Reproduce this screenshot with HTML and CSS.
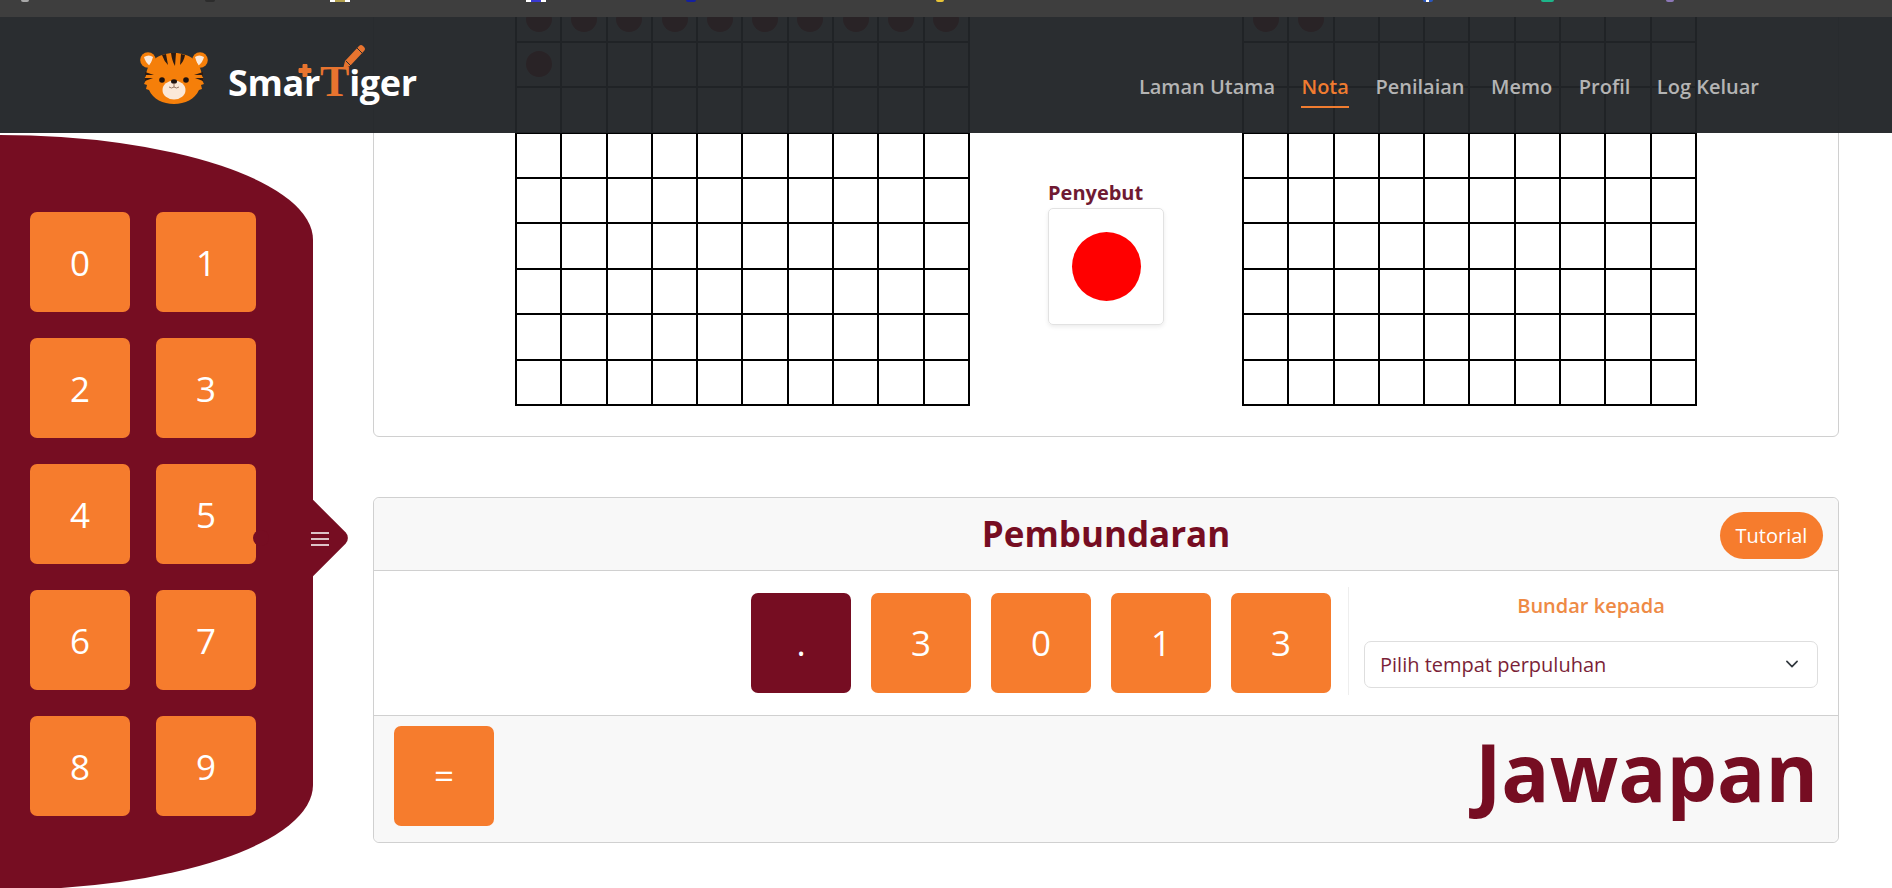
FILE: index.html
```html
<!DOCTYPE html>
<html>

<head>
    <meta charset="utf-8">
    <title>SmarTiger - Nota</title>
    <link rel="stylesheet" href="styles.css">
</head>

<body>
    <div class="tab-strip">
        <span class="fav fav-grey"></span>
        <span class="fav fav-dark"></span>
        <span class="fav fav-gold"></span>
        <span class="fav fav-white"></span>
        <span class="fav fav-blue"></span>
        <span class="fav fav-yellow"></span>
        <span class="fav fav-fb"></span>
        <span class="fav fav-green"></span>
        <span class="fav fav-purple"></span>
    </div>

    <!-- content is scrolled, the top of the first card is out of view -->
    <main class="page">
        <section class="card card-blocks">
            <div class="block-grid">
                <div class="cell dot"></div><div class="cell dot"></div><div class="cell dot"></div><div class="cell dot"></div><div class="cell dot"></div><div class="cell dot"></div><div class="cell dot"></div><div class="cell dot"></div><div class="cell dot"></div><div class="cell dot"></div>
                <div class="cell dot"></div><div class="cell dot"></div><div class="cell dot"></div><div class="cell dot"></div><div class="cell dot"></div><div class="cell dot"></div><div class="cell dot"></div><div class="cell dot"></div><div class="cell dot"></div><div class="cell dot"></div>
                <div class="cell dot"></div><div class="cell"></div><div class="cell"></div><div class="cell"></div><div class="cell"></div><div class="cell"></div><div class="cell"></div><div class="cell"></div><div class="cell"></div><div class="cell"></div>
                <div class="cell"></div><div class="cell"></div><div class="cell"></div><div class="cell"></div><div class="cell"></div><div class="cell"></div><div class="cell"></div><div class="cell"></div><div class="cell"></div><div class="cell"></div>
                <div class="cell"></div><div class="cell"></div><div class="cell"></div><div class="cell"></div><div class="cell"></div><div class="cell"></div><div class="cell"></div><div class="cell"></div><div class="cell"></div><div class="cell"></div>
                <div class="cell"></div><div class="cell"></div><div class="cell"></div><div class="cell"></div><div class="cell"></div><div class="cell"></div><div class="cell"></div><div class="cell"></div><div class="cell"></div><div class="cell"></div>
                <div class="cell"></div><div class="cell"></div><div class="cell"></div><div class="cell"></div><div class="cell"></div><div class="cell"></div><div class="cell"></div><div class="cell"></div><div class="cell"></div><div class="cell"></div>
                <div class="cell"></div><div class="cell"></div><div class="cell"></div><div class="cell"></div><div class="cell"></div><div class="cell"></div><div class="cell"></div><div class="cell"></div><div class="cell"></div><div class="cell"></div>
                <div class="cell"></div><div class="cell"></div><div class="cell"></div><div class="cell"></div><div class="cell"></div><div class="cell"></div><div class="cell"></div><div class="cell"></div><div class="cell"></div><div class="cell"></div>
                <div class="cell"></div><div class="cell"></div><div class="cell"></div><div class="cell"></div><div class="cell"></div><div class="cell"></div><div class="cell"></div><div class="cell"></div><div class="cell"></div><div class="cell"></div>
            </div>

            <div class="denominator">
                <div class="denominator-label">Penyebut</div>
                <div class="denominator-box"><span class="red-circle"></span></div>
            </div>

            <div class="block-grid">
                <div class="cell dot"></div><div class="cell dot"></div><div class="cell dot"></div><div class="cell dot"></div><div class="cell dot"></div><div class="cell dot"></div><div class="cell dot"></div><div class="cell dot"></div><div class="cell dot"></div><div class="cell dot"></div>
                <div class="cell dot"></div><div class="cell dot"></div><div class="cell"></div><div class="cell"></div><div class="cell"></div><div class="cell"></div><div class="cell"></div><div class="cell"></div><div class="cell"></div><div class="cell"></div>
                <div class="cell"></div><div class="cell"></div><div class="cell"></div><div class="cell"></div><div class="cell"></div><div class="cell"></div><div class="cell"></div><div class="cell"></div><div class="cell"></div><div class="cell"></div>
                <div class="cell"></div><div class="cell"></div><div class="cell"></div><div class="cell"></div><div class="cell"></div><div class="cell"></div><div class="cell"></div><div class="cell"></div><div class="cell"></div><div class="cell"></div>
                <div class="cell"></div><div class="cell"></div><div class="cell"></div><div class="cell"></div><div class="cell"></div><div class="cell"></div><div class="cell"></div><div class="cell"></div><div class="cell"></div><div class="cell"></div>
                <div class="cell"></div><div class="cell"></div><div class="cell"></div><div class="cell"></div><div class="cell"></div><div class="cell"></div><div class="cell"></div><div class="cell"></div><div class="cell"></div><div class="cell"></div>
                <div class="cell"></div><div class="cell"></div><div class="cell"></div><div class="cell"></div><div class="cell"></div><div class="cell"></div><div class="cell"></div><div class="cell"></div><div class="cell"></div><div class="cell"></div>
                <div class="cell"></div><div class="cell"></div><div class="cell"></div><div class="cell"></div><div class="cell"></div><div class="cell"></div><div class="cell"></div><div class="cell"></div><div class="cell"></div><div class="cell"></div>
                <div class="cell"></div><div class="cell"></div><div class="cell"></div><div class="cell"></div><div class="cell"></div><div class="cell"></div><div class="cell"></div><div class="cell"></div><div class="cell"></div><div class="cell"></div>
                <div class="cell"></div><div class="cell"></div><div class="cell"></div><div class="cell"></div><div class="cell"></div><div class="cell"></div><div class="cell"></div><div class="cell"></div><div class="cell"></div><div class="cell"></div>
            </div>
        </section>

        <section class="card card-round">
            <header class="card-head">
                <h2>Pembundaran</h2>
                <button class="btn-tutorial">Tutorial</button>
            </header>
            <div class="card-body">
                <div class="tile tile-maroon">.</div>
                <div class="tile">3</div>
                <div class="tile">0</div>
                <div class="tile">1</div>
                <div class="tile">3</div>
                <div class="round-panel">
                    <div class="round-label">Bundar kepada</div>
                    <div class="round-select">
                        <span>Pilih tempat perpuluhan</span>
                        <svg class="chevron" viewBox="0 0 16 16" width="16" height="16">
                            <path d="M2 5l6 6 6-6" fill="none" stroke="#343a40" stroke-width="2" stroke-linecap="round" stroke-linejoin="round" />
                        </svg>
                    </div>
                </div>
            </div>
            <footer class="card-foot">
                <div class="tile">=</div>
                <div class="answer">Jawapan</div>
            </footer>
        </section>
    </main>

    <nav class="navbar">
        <a class="brand">
            <svg class="tiger" viewBox="0 0 80 65" width="80" height="65">
                <circle cx="13" cy="15" r="7.8" fill="#f57f0a" />
                <circle cx="65" cy="15" r="7.8" fill="#f57f0a" />
                <path d="M9 12q5-3 9 0l-3 9q-5-4-6-9z" fill="#fbe8d8" />
                <path d="M69 12q-5-3-9 0l3 9q5-4 6-9z" fill="#fbe8d8" />
                <path d="M39 8c16 0 27 9 28 23l2 3-2 1 2 4-3 1 1 4-3 1c-4 9-14 14-25 14s-21-5-25-14l-3-1 1-4-3-1 2-4-2-1 2-3C12 17 23 8 39 8z" fill="#f57f0a" />
                <path d="M27 10l4-1 2 11q-4-4-6-10zM36 8h5l-1 13q-3-5-4-13zM46 9l4 1q-1 6-5 10z" fill="#2b1a12" />
                <path d="M10 27l9 3-9 0zM9 33l9 0-8 3zM68 27l-9 3 9 0zM69 33l-9 0 8 3z" fill="#2b1a12" />
                <circle cx="27" cy="35" r="2.8" fill="#1d1210" />
                <circle cx="51" cy="35" r="2.8" fill="#1d1210" />
                <ellipse cx="39" cy="45" rx="11.5" ry="9.5" fill="#fbe8d8" />
                <ellipse cx="39" cy="36.5" rx="3" ry="2.2" fill="#1d1210" />
                <path d="M39 38v4M34 42q2.500 2 5 0q2.500 2 5 0" fill="none" stroke="#8a6a58" stroke-width="0.9" />
            </svg>
            <span class="brand-name">Smar<span class="brand-t">T</span>iger</span>
            <svg class="brand-pencil" viewBox="0 0 70 40" width="70" height="40">
                <path d="M3 29.500h4v-4h4v4h4v4h-4v4h-4v-4h-4z" fill="#e8742f" stroke="#e8742f" stroke-linejoin="round" />
                <path d="M47 30l2-8 14-15q2-2 4 0l1 1q2 2 0 4l-14 15z" fill="#e8742f" />
                <path d="M50 22l6 6M61 9l6 6" stroke="#2a2d31" stroke-width="1" />
            </svg>
        </a>
        <ul class="nav-links">
            <li><a>Laman Utama</a></li>
            <li><a class="active">Nota</a></li>
            <li><a>Penilaian</a></li>
            <li><a>Memo</a></li>
            <li><a>Profil</a></li>
            <li><a>Log Keluar</a></li>
        </ul>
    </nav>

    <aside class="sidebar">
        <div class="tile">0</div>
        <div class="tile">1</div>
        <div class="tile">2</div>
        <div class="tile">3</div>
        <div class="tile">4</div>
        <div class="tile">5</div>
        <div class="tile">6</div>
        <div class="tile">7</div>
        <div class="tile">8</div>
        <div class="tile">9</div>
        <div class="sidebar-toggle">
            <svg viewBox="0 0 18 14" width="18" height="14">
                <path d="M0 1h18M0 7h18M0 13h18" stroke="#fff" stroke-width="1.600" />
            </svg>
        </div>
    </aside>
</body>

</html>
```

FILE: styles.css
```css
html,
body {
    height: 100%;
    margin: 0;
    padding: 0;
}

body {
    position: relative;
    overflow: hidden;
    background: #fff;
    font-family: "Open Sans", "Liberation Sans", sans-serif;
}

/* browser bookmarks, only the bottom edge is left */
.tab-strip {
    display: flex;
    position: relative;
    z-index: 3;
    height: 17px;
    background: #3e3e3e;
}

.fav {
    display: block;
    height: 2px;
    border-radius: 0 0 6px 6px;
}

.fav-grey { width: 8px; margin-left: 21px; background: #a9a9a9; }
.fav-dark { width: 10px; margin-left: 176px; background: #2c2c2c; }
.fav-gold { width: 20px; margin-left: 115px; border-radius: 0; background: linear-gradient(90deg, #fff 25%, #b3a14e 25%, #b3a14e 75%, #fff 75%); }
.fav-white { width: 20px; margin-left: 176px; border-radius: 0; background: linear-gradient(90deg, #fff 25%, #3a3ad0 25%, #3a3ad0 75%, #fff 75%); }
.fav-blue { width: 10px; margin-left: 140px; background: #1420a0; }
.fav-yellow { width: 8px; margin-left: 240px; background: #e8c437; }
.fav-fb { width: 10px; margin-left: 479px; background: linear-gradient(90deg, #2a57c0 35%, #fff 35%, #fff 65%, #2a57c0 65%); }
.fav-green { width: 13px; margin-left: 108px; background: #1db58a; }
.fav-purple { width: 8px; margin-left: 112px; background: #8d78b8; }

.navbar {
    position: absolute;
    top: 17px;
    left: 0;
    right: 0;
    z-index: 2;
    height: 116px;
    display: flex;
    justify-content: space-between;
    align-items: center;
    padding: 0 133px 0 135px;
    box-sizing: border-box;
    background: rgba(33, 36, 40, .96);
}

.brand {
    position: relative;
    display: flex;
    align-items: center;
    margin-top: 5px;
}

.brand-name {
    margin: 9px 0 0 13px;
    font-size: 36px;
    font-weight: 700;
    letter-spacing: -.3px;
    color: #fff;
}

.brand-t {
    font-family: "Liberation Serif", serif;
    font-weight: 700;
    font-size: 44px;
    line-height: 1;
    color: #e8742f;
}

.brand-pencil {
    position: absolute;
    left: 161px;
    top: -6px;
}

.nav-links {
    display: flex;
    gap: 26.5px;
    list-style: none;
    margin: 30px 0 0;
    padding: 0;
}

.nav-links a {
    display: block;
    padding-bottom: 6px;
    border-bottom: 2px solid transparent;
    font-size: 20px;
    font-weight: 600;
    color: #b4b4b4;
}

.nav-links a.active {
    color: #f07c30;
    border-bottom-color: #f07c30;
}

.page {
    margin-top: -97px;
    padding: 0 53px 0 373px;
}

.card {
    border: 1px solid #d0d0d0;
    border-radius: 6px;
    background: #fff;
}

.card-blocks {
    display: flex;
    justify-content: center;
    gap: 78px;
    padding: 29px 0 30px;
    margin-bottom: 60px;
}

.block-grid {
    display: grid;
    grid-template-columns: repeat(10, 1fr);
    grid-auto-rows: 45.4px;
    width: 455px;
    border-top: 2px solid #000;
    border-left: 2px solid #000;
    box-sizing: border-box;
}

.cell {
    display: flex;
    justify-content: center;
    align-items: center;
    border-right: 2px solid #000;
    border-bottom: 2px solid #000;
}

.dot::before {
    content: "";
    width: 26px;
    height: 26px;
    border-radius: 50%;
    background: #e00000;
}

.denominator {
    align-self: flex-end;
    width: 116px;
    margin-bottom: 81px;
}

.denominator-label {
    font-size: 20px;
    font-weight: 700;
    line-height: 24px;
    margin-bottom: 3px;
    color: #6f1a33;
}

.denominator-box {
    display: flex;
    justify-content: center;
    align-items: center;
    height: 117px;
    box-sizing: border-box;
    border: 1px solid #e2e2e2;
    border-radius: 5px;
    box-shadow: 0 2px 4px rgba(0, 0, 0, .08);
}

.red-circle {
    width: 69px;
    height: 69px;
    border-radius: 50%;
    background: #f00;
}

.card-head {
    position: relative;
    display: flex;
    justify-content: center;
    align-items: center;
    height: 72px;
    background: #f8f8f8;
    border-bottom: 1px solid #d0d0d0;
    border-radius: 6px 6px 0 0;
}

.card-head h2 {
    margin: 0;
    font-size: 35px;
    font-weight: 700;
    color: #760d22;
}

.btn-tutorial {
    position: absolute;
    right: 15px;
    top: 14px;
    width: 103px;
    height: 47px;
    border: none;
    border-radius: 24px;
    background: #f67c2d;
    color: #fff;
    font-family: inherit;
    font-size: 20px;
}

.tile {
    display: flex;
    flex: none;
    justify-content: center;
    align-items: center;
    width: 100px;
    height: 100px;
    border-radius: 7px;
    background: #f67c2d;
    color: #fff;
    font-size: 35px;
}

.tile-maroon {
    background: #760d22;
}

.card-body {
    display: flex;
    justify-content: flex-end;
    gap: 20px;
    height: 144px;
    padding: 22px 20px 0 0;
    box-sizing: border-box;
}

.round-panel {
    width: 470px;
    height: 108px;
    margin: -6px 0 0 -3px;
    padding-left: 15px;
    box-sizing: border-box;
    border-left: 1px solid #eee;
}

.round-label {
    margin: 6px 0 22px;
    line-height: 26px;
    text-align: center;
    font-size: 20px;
    font-weight: 600;
    color: #ee8a45;
}

.round-select {
    display: flex;
    justify-content: space-between;
    align-items: center;
    height: 47px;
    padding: 0 17px 0 15px;
    box-sizing: border-box;
    border: 1px solid #dedede;
    border-radius: 7px;
    font-size: 20px;
    color: #7b1f38;
}

.chevron {
    transform: scale(.85);
}

.card-foot {
    display: flex;
    justify-content: space-between;
    align-items: center;
    height: 127px;
    box-sizing: border-box;
    padding: 0 20px 6px;
    border-top: 1px solid #d0d0d0;
    border-radius: 0 0 6px 6px;
    background: #f8f8f8;
}

.answer {
    margin-bottom: 9px;
    font-size: 80px;
    font-weight: 700;
    line-height: 1;
    color: #760d22;
}

.sidebar {
    position: absolute;
    left: 0;
    top: 135px;
    z-index: 1;
    width: 313px;
    height: 755px;
    display: grid;
    grid-template-columns: 100px 100px;
    grid-auto-rows: 100px;
    gap: 26px;
    padding: 77px 0 0 30px;
    box-sizing: border-box;
    background: #760d22;
    border-radius: 0 313px 313px 0 / 0 105px 105px 0;
}

.sidebar-toggle {
    position: absolute;
    left: 100%;
    top: 403px;
    width: 0;
    height: 0;
}

/* the arrow tab on the edge, only the tip is rounded */
.sidebar-toggle::before {
    content: "";
    position: absolute;
    left: -27px;
    top: -27px;
    width: 54px;
    height: 54px;
    border-radius: 0 8px 0 0;
    background: #760d22;
    transform: rotate(45deg);
}

/* little bump over the "5" tile */
.sidebar-toggle::after {
    content: "";
    position: absolute;
    left: -60px;
    top: -8px;
    width: 16px;
    height: 16px;
    border-radius: 50%;
    background: #760d22;
}

.sidebar-toggle svg {
    position: absolute;
    left: -2px;
    top: -6px;
    z-index: 1;
}
```
